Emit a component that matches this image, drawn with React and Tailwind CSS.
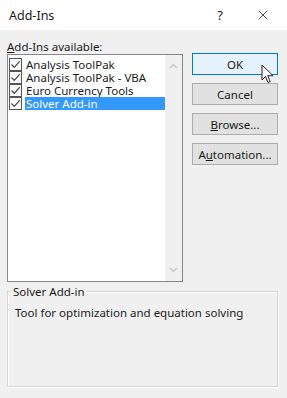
import { X } from 'lucide-react';

const addIns = [
  { name: 'Analysis ToolPak', checked: true },
  { name: 'Analysis ToolPak - VBA', checked: true },
  { name: 'Euro Currency Tools', checked: true },
  { name: 'Solver Add-in', checked: true, selected: true },
];

const CheckBox = ({ checked }) => (
  <span className="w-[13px] h-[13px] border border-[#555] bg-white flex items-center justify-center shrink-0">
    {checked && (
      <svg width="11" height="11" viewBox="0 0 11 11" fill="none">
        <path d="M1.5 5.5l2.8 2.8L9.8 2.2" stroke="#444" strokeWidth="1.2" />
      </svg>
    )}
  </span>
);

const Chevron = ({ up }) => (
  <svg width="9" height="6" viewBox="0 0 9 6" fill="none">
    <path d={up ? 'M1 5l3.5-3.5L8 5' : 'M1 1l3.5 3.5L8 1'} stroke="#c2c2c2" strokeWidth="1.2" />
  </svg>
);

const Cursor = () => (
  <svg width="13" height="20" viewBox="0 0 13 20" className="absolute left-[261px] top-[64px]">
    <path d="M1 1v15l3.5-3.5 2.5 6 2.2-1-2.5-5.8H12z" fill="white" stroke="#222" strokeWidth="1" strokeLinejoin="round" />
  </svg>
);

const DialogButton = ({ children, primary }) => (
  <button
    className={
      primary
        ? 'h-[22px] w-[86px] bg-[#e5f1fb] border border-[#0078d7] text-[#1a1a1a]'
        : 'h-[22px] w-[86px] bg-[#e1e1e1] border border-[#adadad] text-[#1a1a1a]'
    }
  >
    {children}
  </button>
);

export default function App() {
  return (
    <div className="relative w-[287px] h-[398px] bg-[#f0f0f0] text-[11px] leading-[13px] font-['Noto_Sans',sans-serif] text-[#1a1a1a] overflow-hidden">
      {/* Title bar */}
      <div className="h-[30px] bg-white flex items-center pl-[9px]">
        <span className="flex-1 text-[12.5px]">Add-Ins</span>
        <span className="w-[20px] text-center text-[13px] mr-[25px]">?</span>
        <X size={16} strokeWidth={1.2} className="mr-[16px]" />
      </div>

      <div className="px-[7px] pt-[10px]">
        <div className="h-[14px] text-[11.5px]">
          <span className="underline">A</span>dd-Ins available:
        </div>

        <div className="flex">
          {/* List */}
          <div className="w-[176px] h-[228px] border border-[#828790] bg-white flex">
            <div className="flex-1 pt-[3px] pl-[1px]">
              {addIns.map((a) => (
                <div key={a.name} className="flex items-center h-[13px] gap-[3px] text-[11.5px]">
                  <CheckBox checked={a.checked} />
                  <span
                    className={
                      a.selected
                        ? 'bg-[#3399ff] text-white flex-1 h-[13px] pl-[1px] whitespace-nowrap'
                        : 'pl-[1px] whitespace-nowrap'
                    }
                  >
                    {a.name}
                  </span>
                </div>
              ))}
            </div>
            <div className="w-[17px] bg-[#f0f0f0] flex flex-col items-center justify-between py-[8px]">
              <Chevron up />
              <Chevron />
            </div>
          </div>

          {/* Buttons */}
          <div className="ml-[9px] -mt-[1px] flex flex-col gap-[8px] text-[11.5px]">
            <DialogButton primary>OK</DialogButton>
            <DialogButton>Cancel</DialogButton>
            <DialogButton>
              <span className="underline">B</span>rowse...
            </DialogButton>
            <DialogButton>
              A<span className="underline">u</span>tomation...
            </DialogButton>
          </div>
        </div>

        {/* Description group */}
        <div className="relative mt-[9px] w-[271px] h-[96px] border border-[#d5d5d5] shadow-[inset_1px_1px_0_#fff,1px_1px_0_#fff] text-[11.5px]">
          <span className="absolute -top-[7px] left-[4px] bg-[#f0f0f0] px-[1px]">Solver Add-in</span>
          <div className="pt-[14px] pl-[7px]">Tool for optimization and equation solving</div>
        </div>
      </div>

      <Cursor />
    </div>
  );
}
